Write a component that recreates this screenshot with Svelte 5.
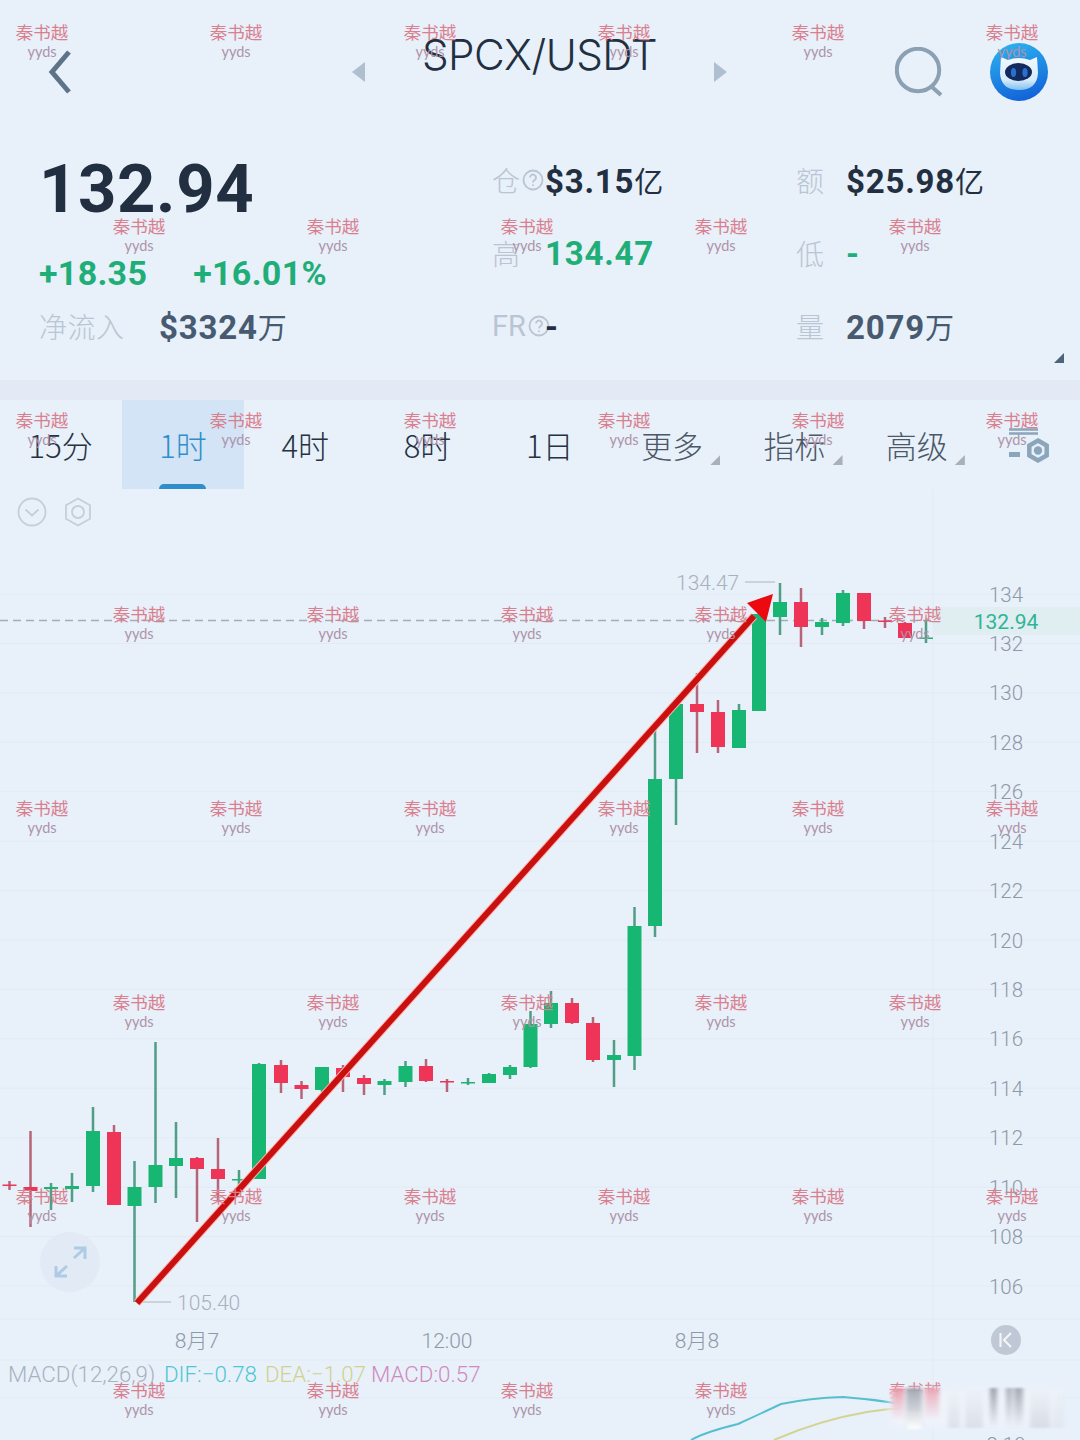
<script>
  const tabs = [
    { t: '15分' }, { t: '1时', active: true }, { t: '4时' }, { t: '8时' }, { t: '1日' },
    { t: '更多', more: true }, { t: '指标', more: true }, { t: '高级', more: true }
  ];
  // x, wickTop, wickBottom, bodyTop, bodyBottom, colour
  const candles = [
    [9.5,1181,1190,1184.5,1186,'r'],[30.5,1131,1227,1187,1191,'r'],[51,1183,1210,1187,1189,'g'],[72,1173,1202,1186,1189,'g'],
    [93,1107,1192,1131,1186,'g'],[114,1125,1205,1132,1205,'r'],[134.5,1161,1302,1187,1206,'g'],[155.5,1042,1203,1165,1187,'g'],
    [176,1122,1198,1158,1166,'g'],[197,1157,1222,1158,1169,'r'],[218,1138,1200,1169,1179,'r'],[239,1170,1190,1179,1180.5,'g'],
    [259,1063,1179,1064,1179,'g'],[281,1060,1093,1065,1083,'r'],[301.5,1081,1099,1085,1089,'r'],[322,1067,1092,1067,1090,'g'],
    [343,1065,1092,1068,1077,'r'],[364,1075,1095,1078,1084,'r'],[384.5,1079,1095,1081,1085,'g'],[405.5,1061,1087,1066,1082,'g'],
    [426,1059,1082,1066,1081,'r'],[447,1079,1092,1081,1082.5,'r'],[468,1078,1085,1082,1083.5,'g'],[489,1073,1083,1074,1083,'g'],
    [510,1065,1079,1067,1075,'g'],[530.5,1011,1068,1024,1067,'g'],[551,991,1028,1003,1024,'g'],[572,998,1024,1003,1023,'r'],
    [593,1017,1062,1023,1060,'r'],[614,1040,1087,1055,1060,'g'],[634.5,907,1070,926,1056,'g'],[655,730,937,779,926,'g'],
    [676,704,825,704,779,'g'],[697,673,753,704,712,'r'],[718,700,753,712,747,'r'],[739,704,748,710,748,'g'],
    [759,606,711,614,711,'g'],[780,583,635,602,617,'g'],[801,588,647,602,627,'r'],[822,618,635,622,627,'g'],
    [843,590,626,593,623,'g'],[864,593,629,593,621,'r'],[885,617,628,620.5,622,'r'],[905,622,638,623,638,'r'],[926,620,643,637.5,639,'g']
  ];
  const prices = [134,132,130,128,126,124,122,120,118,116,114,112,110,108,106];
  const priceY = (i) => 594 + i * 49.43;
  const wmRows = [0, 1, 2, 3, 4, 5, 6, 7];
  // smeared streaks over the bottom-right corner: x, width, gradient id, opacity
  const streaks = [
    [12,12,'p',0.7],[26,16,'k',0.75],[45,14,'p',0.6],[68,12,'l',0.45],[85,18,'l',0.5],[110,7,'k',0.85],[126,6,'k',0.7],[134,9,'k',0.75],[150,20,'l',0.6],[172,12,'l',0.3]
  ];
</script>

<div class="page">
  <header class="top">
    <svg class="back" viewBox="0 0 24 44" aria-hidden="true"><path d="M21 2 4 22l17 20" /></svg>
    <div class="pair">
      <svg class="tri" viewBox="0 0 13 20" aria-hidden="true"><path d="M13 0v20L0 10z" /></svg>
      <h1>SPCX/USDT</h1>
      <svg class="tri" viewBox="0 0 13 20" aria-hidden="true"><path d="M0 0v20l13-10z" /></svg>
    </div>
    <svg class="search" viewBox="0 0 48 50" aria-hidden="true">
      <circle cx="23" cy="23" r="21.2" />
      <path d="m37 40 9 8" />
    </svg>
    <svg class="bot" viewBox="0 0 58 58" aria-hidden="true">
      <defs>
        <linearGradient id="botbg" x1="0.3" y1="0" x2="0.6" y2="1">
          <stop offset="0" stop-color="#2cb0f0" /><stop offset="1" stop-color="#1262d8" />
        </linearGradient>
        <linearGradient id="botface" x1="0" y1="0" x2="0" y2="1">
          <stop offset="0" stop-color="#f2f8fd" /><stop offset="0.7" stop-color="#d7ebfa" /><stop offset="1" stop-color="#7fc0ef" />
        </linearGradient>
      </defs>
      <circle cx="29" cy="29" r="29" fill="url(#botbg)" />
      <path d="M11 14 18 17Q29 13 40 17L47 14 48 30Q47 47 29 47 11 47 10 30Z" fill="url(#botface)" />
      <ellipse cx="28.500" cy="29" rx="13.500" ry="9" fill="#132a5c" />
      <ellipse cx="23.500" cy="29.500" rx="2.600" ry="4.500" fill="#2a6fd0" />
      <ellipse cx="35" cy="29.500" rx="2.600" ry="4.500" fill="#2a6fd0" />
    </svg>
  </header>

  <section class="stats">
    <div class="main">
      <div class="price">132.94</div>
      <div class="change"><span>+18.35</span><span>+16.01%</span></div>
      <div class="inflow"><span class="label">净流入</span><span class="val soft">$3324<small>万</small></span></div>
    </div>
    <div class="cols">
      <div class="cell a"><span class="label">仓<svg class="q" viewBox="0 0 22 22" aria-hidden="true"><circle cx="11" cy="11" r="9.5" /><path d="M8 8.6a3 3 0 1 1 4.6 2.5c-1 .7-1.6 1.2-1.6 2.4M11 15.6v1.4" /></svg></span><span class="val">$3.15<small>亿</small></span></div>
      <div class="cell b"><span class="label">额</span><span class="val">$25.98<small>亿</small></span></div>
      <div class="cell a"><span class="label">高</span><span class="val up">134.47</span></div>
      <div class="cell b"><span class="label">低</span><span class="val up">-</span></div>
      <div class="cell a"><span class="label fr">FR<svg class="q" viewBox="0 0 22 22" aria-hidden="true"><circle cx="11" cy="11" r="9.5" /><path d="M8 8.6a3 3 0 1 1 4.6 2.5c-1 .7-1.6 1.2-1.6 2.4M11 15.6v1.4" /></svg></span><span class="val flat">-</span></div>
      <div class="cell b"><span class="label">量</span><span class="val soft">2079<small>万</small></span></div>
    </div>
    <i class="corner"></i>
  </section>

  <div class="band"></div>

  <nav class="tabs">
    {#each tabs as tab}
      <div class="tab" class:active={tab.active} class:more={tab.more}>
        <span>{tab.t}</span>
        {#if tab.more}<i class="mini"></i>{/if}
        {#if tab.active}<b></b>{/if}
      </div>
    {/each}
    <div class="tab cog">
      <svg viewBox="0 0 44 44" aria-hidden="true">
        <path class="bars" d="M1 5.500h29M1 9.500h29" />
        <path class="bars thick" d="M1 30.500h11" />
        <path class="hex" d="M30 16.500 38.700 21.500v10L30 36.500 21.300 31.500v-10z" />
        <circle class="hexin" cx="30" cy="26.500" r="4.200" />
      </svg>
    </div>
  </nav>

  <section class="chart">
    <svg viewBox="0 489 1080 951" width="1080" height="951" aria-hidden="true">
      {#each prices as p, i}
        <line class="grid" x1="0" x2="1080" y1={priceY(i)} y2={priceY(i)} />
      {/each}
      <line class="grid" x1="933" x2="933" y1="489" y2="1440" />
      <line class="grid" x1="0" x2="1080" y1="1319" y2="1319" />
      <line class="grid" x1="0" x2="1080" y1="1360" y2="1360" />
      <line class="grid" x1="0" x2="1080" y1="1398" y2="1398" />

      <circle class="ghost" cx="32" cy="512" r="13.500" />
      <path class="ghost" d="m25.500 509.500 6.500 6 6.500-6" />
      <path class="ghost" d="M78 498.500 90 505.300v13.400L78 525.500 66 518.700v-13.400z" />
      <circle class="ghost" cx="78" cy="512" r="6" />

      <rect class="tag" x="933" y="607" width="147" height="28" />
      <line class="dash" x1="0" x2="933" y1="620.500" y2="620.500" />

      {#each candles as c}
        <line class={c[5] === 'g' ? 'wick g' : 'wick r'} x1={c[0]} x2={c[0]} y1={c[1]} y2={c[2]} />
        <rect class={c[5] === 'g' ? 'body g' : 'body r'} x={c[0] - 7} y={c[3]} width="14" height={c[4] - c[3]} />
      {/each}

      <text class="mark" x="676" y="590">134.47</text>
      <line class="tick" x1="745" x2="775" y1="582" y2="582" />
      <text class="mark" x="177" y="1310">105.40</text>
      <line class="tick" x1="140" x2="171" y1="1302" y2="1302" />

      {#each prices as p, i}
        <text class="axis" x="1006" y={priceY(i) + 7.500}>{p}</text>
      {/each}
      <text class="last" x="1006" y="629">132.94</text>

      <line class="halo" x1="137" y1="1303" x2="754" y2="616" />
      <line class="arrow" x1="137" y1="1303" x2="754" y2="616" />
      <path class="head" d="M773 594 747 603 766 622z" />

      <circle class="expand" cx="70" cy="1262" r="30" />
      <path class="exp" d="M74 1258 85 1248M74 1248h11v11M67 1266 56 1276M56 1266v10h11" />

      <text class="time" x="197" y="1348">8月7</text>
      <text class="time" x="447" y="1348">12:00</text>
      <text class="time" x="697" y="1348">8月8</text>
      <circle class="kbtn" cx="1006" cy="1340" r="15" />
      <path class="kmark" d="M1000.500 1333v14M1011 1333l-7 7 7 7" />

      <text class="macd" x="8" y="1382"><tspan class="m0">MACD(12,26,9)</tspan><tspan class="m1" x="164">DIF:−0.78</tspan><tspan class="m2" x="265">DEA:−1.07</tspan><tspan class="m3" x="371">MACD:0.57</tspan></text>
      <path class="cy" d="M691 1440Q705 1432 738 1424 760 1414 781 1404 810 1398 843 1397 870 1399 895 1403" />
      <path class="ye" d="M774 1440Q820 1420 867 1412 885 1409 905 1408" />
      <text class="axis" x="1006" y="1452">2.19</text>
    </svg>
  </section>

  <div class="marks" aria-hidden="true">
    {#each wmRows as r}
      <div class="wm-row" class:shift={r % 2 === 1}>
        {#each [0, 1, 2, 3, 4, 5] as n}
          <div class="wm"><span>秦书越</span><em>yyds</em></div>
        {/each}
      </div>
    {/each}
  </div>

  <svg class="smear" viewBox="0 0 200 50" aria-hidden="true">
    <defs>
      <filter id="wide" x="-10%" y="-30%" width="120%" height="160%"><feGaussianBlur stdDeviation="4 3" /></filter>
      <filter id="soft"><feGaussianBlur stdDeviation="2.200 1" /></filter>
      <linearGradient id="p" x1="0" y1="0" x2="0" y2="1"><stop offset="0" stop-color="#e8798c" /><stop offset="0.8" stop-color="#e8798c" stop-opacity="0" /></linearGradient>
      <linearGradient id="k" x1="0" y1="0" x2="0" y2="1"><stop offset="0" stop-color="#8d929c" /><stop offset="1" stop-color="#8d929c" stop-opacity="0" /></linearGradient>
      <linearGradient id="l" x1="0" y1="0" x2="0" y2="1"><stop offset="0" stop-color="#eef2f8" /><stop offset="1" stop-color="#c9ced8" /></linearGradient>
    </defs>
    <rect x="10" y="4" width="170" height="38" fill="#eff3fa" filter="url(#wide)" />
    <rect x="27" y="26" width="14" height="18" fill="#fbfcfe" filter="url(#soft)" />
    <g filter="url(#soft)">
      {#each streaks as s}
        <rect x={s[0]} y="3" width={s[1]} height="40" fill="url(#{s[2]})" opacity={s[3]} />
      {/each}
    </g>
  </svg>
</div>

<style>
  :global(body) { margin: 0; background: #e8f0fa; }
  .page {
    position: relative; width: 1080px; height: 1440px; overflow: hidden; background: #e8f0fa;
    font-family: Roboto, "Noto Sans CJK SC", sans-serif; color: #222f40;
  }
  .top {
    height: 147px; box-sizing: border-box; padding: 45px 32px 0 48px;
    display: flex; align-items: flex-start;
  }
  .back { width: 24px; height: 44px; margin-top: 5px; fill: none; stroke: #5d7488; stroke-width: 5; }
  .pair { display: flex; align-items: center; width: 375px; justify-content: space-between; margin: 0 0 0 280px; }
  .pair h1 {
    margin: -17px 0 0; font: 300 42.200px/40px Inter, sans-serif; color: #222f40; letter-spacing: -0.5px; white-space: nowrap;
  }
  .tri { width: 13px; height: 20px; fill: #afbfcf; margin-top: 17px; }
  .search { width: 48px; height: 50px; margin: 2px 0 0 168px; fill: none; stroke: #8ba0b3; stroke-width: 4; }
  .bot { width: 58px; height: 58px; margin: -2px 0 0 47px; flex: none; }

  .stats { position: relative; height: 233px; display: flex; }
  .main { width: 492px; box-sizing: border-box; padding-left: 39px; }
  .price { font-weight: 700; font-size: 67px; line-height: 84px; letter-spacing: 0.6px; }
  .change {
    display: flex; gap: 46px; margin-top: 22px; color: #1fae78; font-weight: 700; font-size: 34px; line-height: 40px; letter-spacing: 0.3px;
  }
  .inflow { display: flex; align-items: center; margin-top: 13px; height: 40px; }
  .inflow .label { width: 120px; letter-spacing: 0.5px; font-size: 28px; }
  .cols { display: grid; grid-template-columns: 304px 1fr; grid-auto-rows: 73px; align-content: start; margin-top: -3.500px; }
  .cell { display: flex; align-items: center; height: 73px; }
  .cell.a .label { flex: 0 0 53px; }
  .cell.b .label { flex: 0 0 50px; }
  .label {
    display: inline-flex; align-items: center; white-space: nowrap;
    color: #b9c5d2; font-size: 28px; font-weight: 300; font-family: "Noto Sans CJK SC", sans-serif;
  }
  .label.fr { font-family: Roboto, sans-serif; font-size: 29px; font-weight: 400; }
  .q { width: 22px; height: 22px; margin-left: 2px; fill: none; stroke: #b9c5d2; stroke-width: 1.800; flex: none; }
  .val { font-weight: 700; font-size: 33px; letter-spacing: 0.8px; white-space: nowrap; }
  .val small { font-size: 29px; font-weight: 400; letter-spacing: 0; font-family: "Noto Sans CJK SC", sans-serif; }
  .val.up { color: #1fae78; }
  .val.soft { color: #475a70; }
  .val.flat { margin-left: -5px; }
  .corner {
    position: absolute; right: 16px; top: 206px; width: 10px; height: 10px; background: #4d6379;
    clip-path: polygon(100% 0, 100% 100%, 0 100%);
  }

  .band { height: 20px; background: #e3eaf5; }
  .tabs { display: grid; grid-template-columns: repeat(9, 122.300px); height: 89px; margin-left: -0.500px; }
  .tab {
    position: relative; display: flex; align-items: center; justify-content: center;
    font-family: "Noto Sans CJK SC", sans-serif; font-weight: 300; font-size: 31px; color: #253242;
    height: 89px; line-height: 87px;
  }
  .tab.more { color: #4a5868; }
  .tab.active { background: #d2e4f6; color: #2f8fc8; }
  .tab b {
    position: absolute; left: 37px; bottom: 0; width: 47px; height: 5px; border-radius: 5px 5px 0 0; background: #2f8ec9;
  }
  .mini {
    position: absolute; right: 13px; top: 55px; width: 10px; height: 10px; background: #a9b0ba;
    clip-path: polygon(100% 0, 100% 100%, 0 100%);
  }
  .cog svg { width: 44px; height: 44px; margin: 2px 0 0 -18px; fill: none; }
  .bars { stroke: #8ba5ba; stroke-width: 2.500; }
  .bars.thick { stroke-width: 5; }
  .hex { fill: none; stroke: #8ba5ba; stroke-width: 4.500; }
  .hexin { fill: #8ba5ba; stroke: none; }

  .chart { height: 951px; }
  .chart > svg { display: block; }
  .grid { stroke: #e2eaf4; stroke-width: 1; }
  .ghost { fill: none; stroke: #c6ced8; stroke-width: 1.800; }
  .tag { fill: #e0edf1; }
  .dash { stroke: #a3acb8; stroke-width: 1.500; stroke-dasharray: 8 5; }
  .wick { stroke-width: 2.500; }
  .wick.g { stroke: #4f9e86; }
  .wick.r { stroke: #b66478; }
  .body.g { fill: #17b673; }
  .body.r { fill: #ee3457; }
  .mark { font: 300 21px Roboto, sans-serif; fill: #a8b1bd; }
  .tick { stroke: #c2c9d2; stroke-width: 1.500; }
  .axis { font: 300 20.500px Roboto, sans-serif; fill: #8e99a8; text-anchor: middle; }
  .last { font: 400 21px Roboto, sans-serif; fill: #2fb596; text-anchor: middle; }
  .halo { stroke: #ffb4ac; stroke-width: 8; }
  .arrow { stroke: #c91010; stroke-width: 6; }
  .head { fill: #ec0a10; }
  .expand { fill: #e2eaf6; }
  .exp { fill: none; stroke: #aecbe4; stroke-width: 3; }
  .time { font: 300 21px Roboto, "Noto Sans CJK SC", sans-serif; fill: #8e99a8; text-anchor: middle; }
  .kbtn { fill: #c0c8d5; }
  .kmark { fill: none; stroke: #f2f5fa; stroke-width: 2.200; }
  .macd { font: 300 22.300px Roboto, sans-serif; }
  .m0 { fill: #a9b3bf; }
  .m1 { fill: #4fc6d3; }
  .m2 { fill: #d3d08e; }
  .m3 { fill: #d08ac0; }
  .cy { fill: none; stroke: #55bfcf; stroke-width: 2; }
  .ye { fill: none; stroke: #d5d394; stroke-width: 2; }

  .marks { position: absolute; left: 0; top: 19.500px; width: 1080px; pointer-events: none; }
  .wm-row { display: flex; height: 194px; margin-left: -55px; }
  .wm-row.shift { margin-left: 42px; }
  .wm { flex: 0 0 194px; display: flex; flex-direction: column; align-items: center; }
  .wm span { font: 400 17.500px/24px "Noto Sans CJK SC", sans-serif; color: #d97f8e; }
  .wm em { font: normal 400 14.500px/18px Lato, sans-serif; color: #ad93a8; margin-top: -1px; }

  .smear { position: absolute; left: 880px; top: 1385px; width: 200px; height: 50px; }
</style>
